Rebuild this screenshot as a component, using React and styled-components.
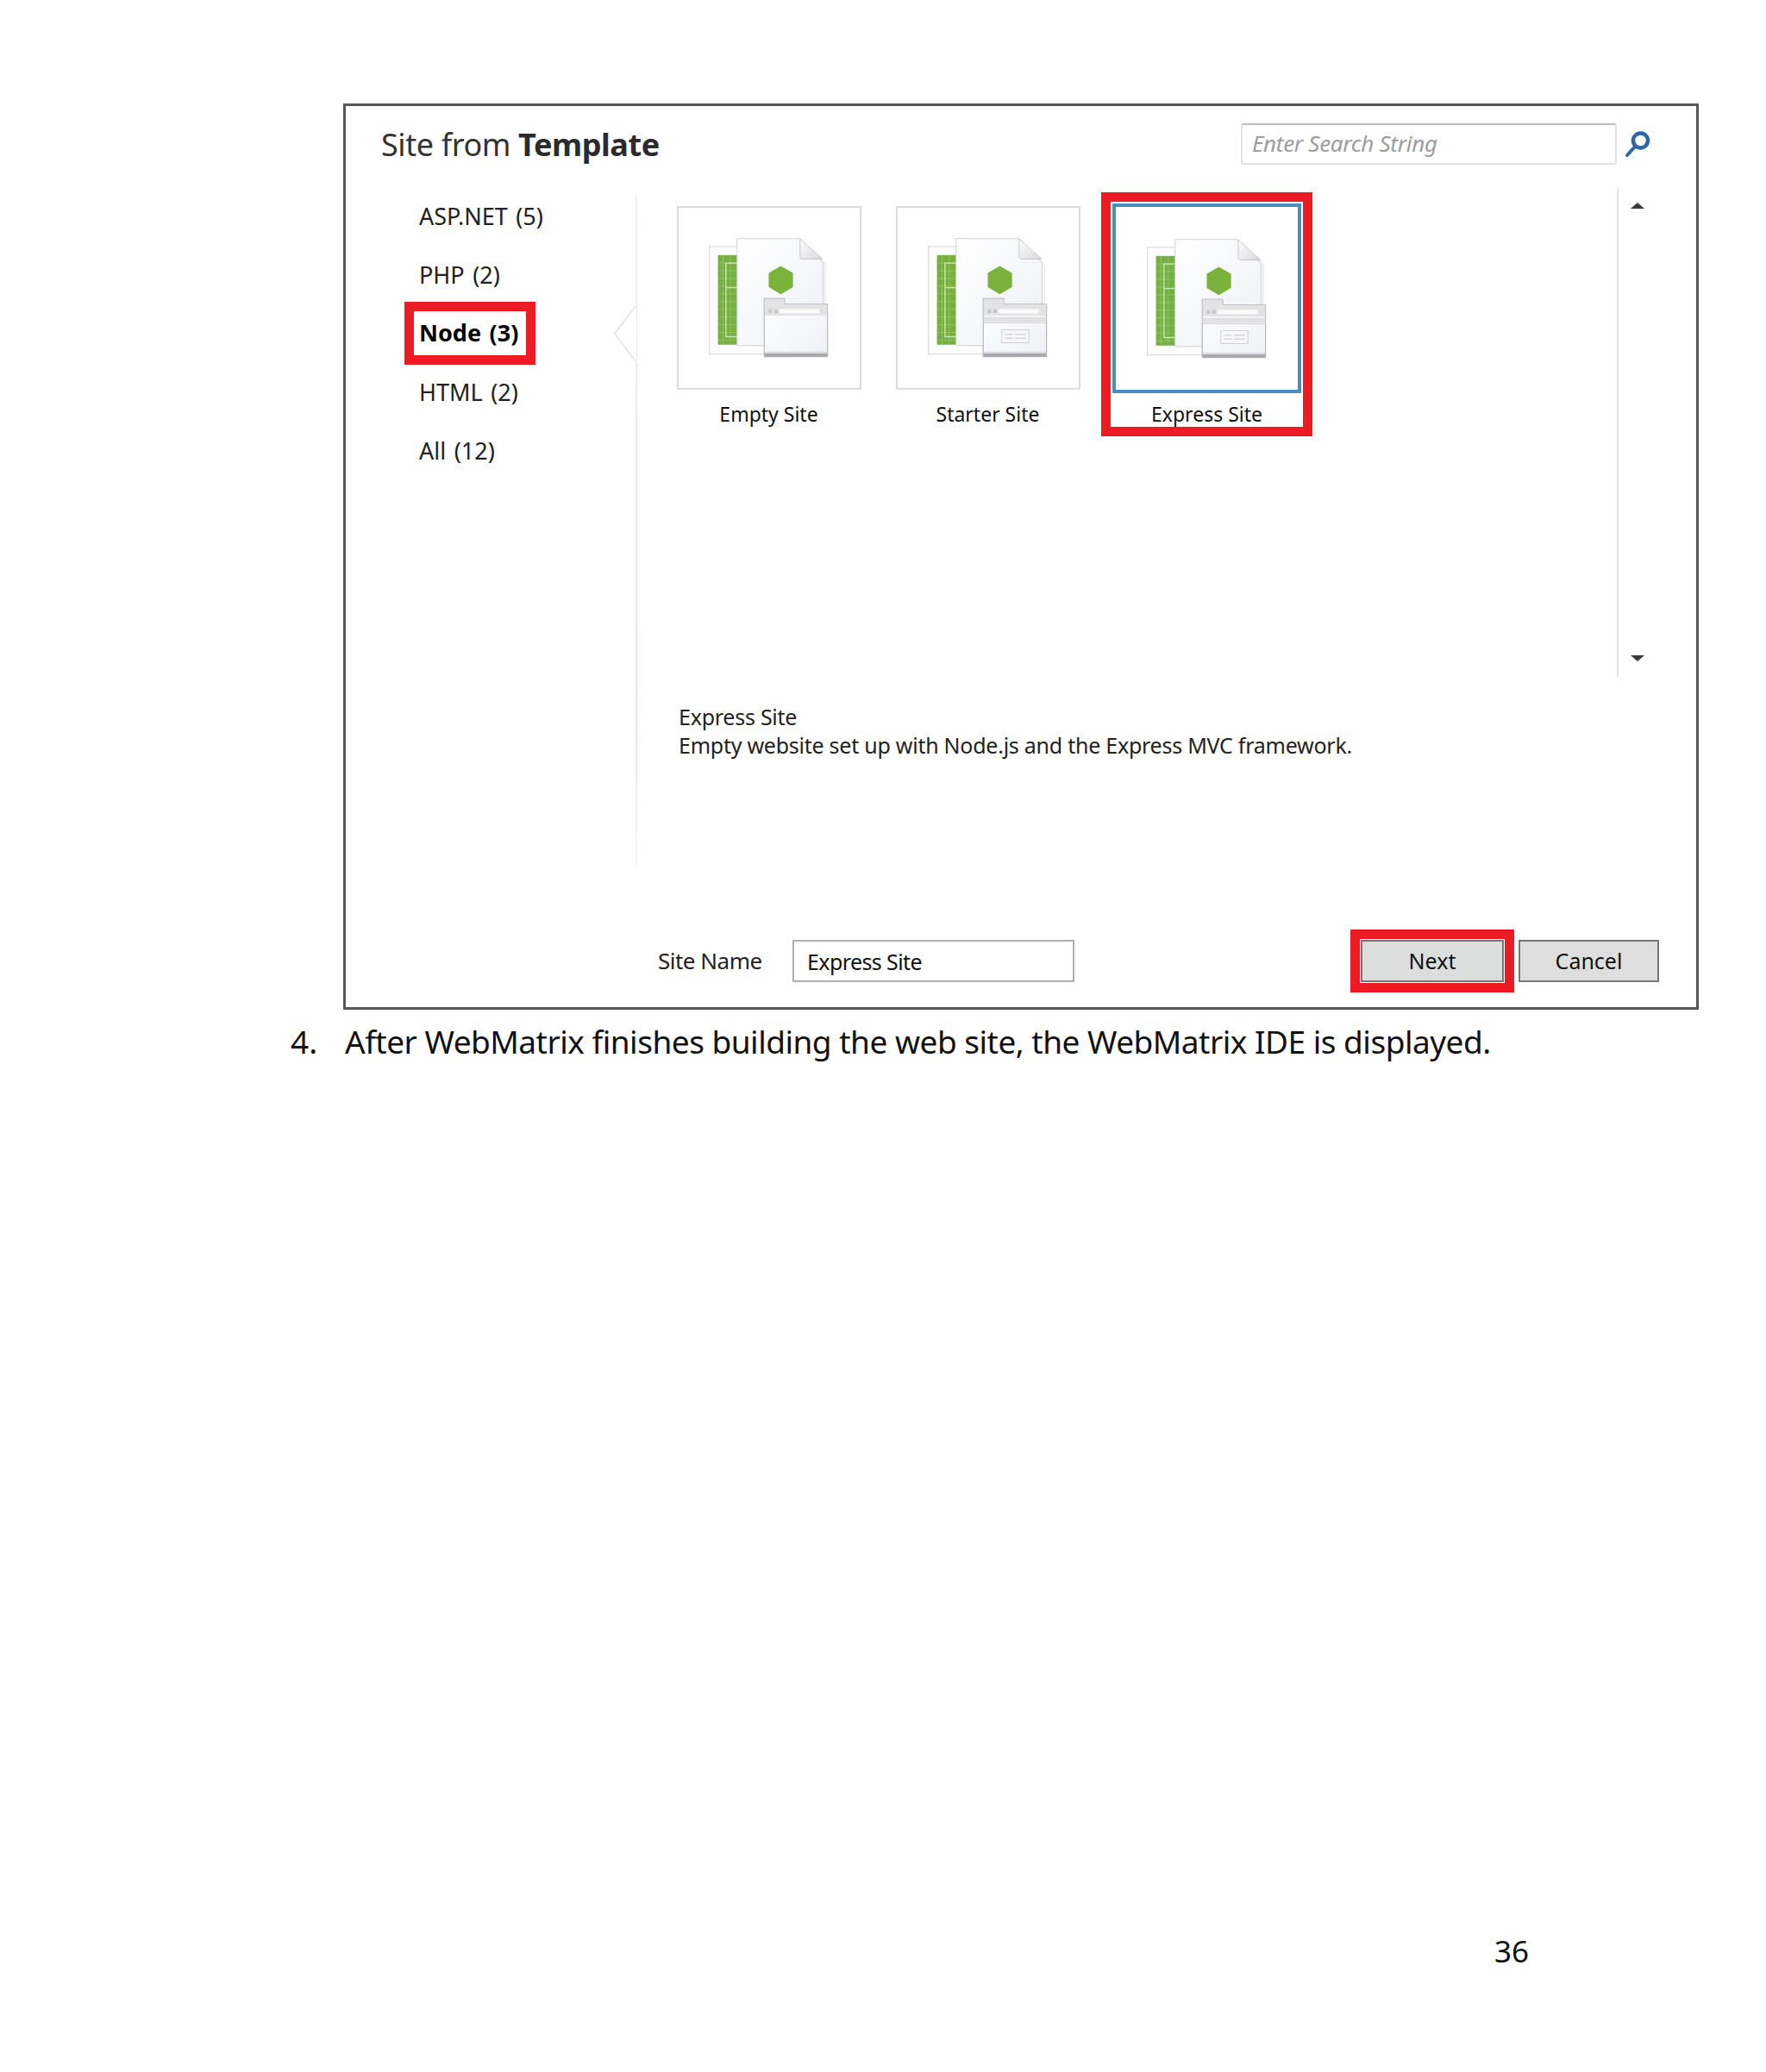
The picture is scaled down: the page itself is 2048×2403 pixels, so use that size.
import React from "react";
import styled, { createGlobalStyle } from "styled-components";

const RED = "#ed1c24";
const UI_FONT = `"Noto Sans", "Open Sans", sans-serif`;

const categories = [
  { label: "ASP.NET (5)" },
  { label: "PHP (2)" },
  { label: "Node (3)", selected: true },
  { label: "HTML (2)" },
  { label: "All (12)" },
];

const templates = [
  { label: "Empty Site", variant: "empty" },
  { label: "Starter Site", variant: "form" },
  { label: "Express Site", variant: "form", selected: true },
];

// the node template thumbnail, coordinates are 3x px
const TemplateIcon = ({ variant }) => (
  <svg width="139" height="139" viewBox="0 0 420 420">
    <defs>
      <linearGradient id="pageFill" x1="0" y1="0" x2="1" y2="1">
        <stop offset="0" stopColor="#ffffff" />
        <stop offset="1" stopColor="#eef0f6" />
      </linearGradient>
      <linearGradient id="foldFill" x1="0" y1="0" x2="1" y2="1">
        <stop offset="0" stopColor="#ffffff" />
        <stop offset="1" stopColor="#d8d8dc" />
      </linearGradient>
    </defs>

    {/* back sheet */}
    <rect x="2" y="30" width="250" height="377" fill="#fdfdfd" stroke="#d4d4d6" strokeWidth="3" />
    <rect x="32" y="60" width="72" height="314" fill="#76b041" />
    {[88, 115, 142, 169, 196, 223, 250, 277, 304, 331, 358].map((y) => (
      <line key={y} x1="32" x2="104" y1={y} y2={y} stroke="#9ccb74" strokeWidth="2" />
    ))}
    {[50, 75].map((x) => (
      <line key={x} x1={x} x2={x} y1="60" y2="374" stroke="#9ccb74" strokeWidth="2" />
    ))}
    <path d="M104 88 H60 V346 H104 M60 174 H104" fill="none" stroke="#cfe5b8" strokeWidth="4" />

    {/* front page with folded corner */}
    <path d="M404 92 V240 H410 V90 L322 4 Z" fill="#e2e2e4" opacity="0.7" />
    <path d="M99 2 H318 L400 88 V377 H99 Z" fill="url(#pageFill)" stroke="#d2d2d4" strokeWidth="3" />
    <path d="M320 3 V66 Q320 74 330 74 H398 Z" fill="url(#foldFill)" stroke="#c8c8cc" strokeWidth="3" />
    <polygon points="252,98 295,122 295,172 252,197 210,172 210,122" fill="#7ab23c" />

    {/* browser window */}
    <path d="M194 212 H266 V232 H416 V416 H194 Z" fill="url(#pageFill)" stroke="#a8a8ac" strokeWidth="3" />
    <path d="M196 214 H264 V234 H415 V272 H196 Z" fill="#e3e3e5" />
    <rect x="248" y="249" width="140" height="15" fill="#fbfbfb" />
    <rect x="210" y="250" width="11" height="13" fill="#c6c6c8" />
    <rect x="230" y="250" width="11" height="13" fill="#c6c6c8" />
    <rect x="195" y="404" width="221" height="12" fill="#a9a9ad" />
    <line x1="195" x2="416" y1="400" y2="400" stroke="#d5d5d8" strokeWidth="3" />
    {variant === "form" && (
      <g>
        <rect x="196" y="276" width="219" height="22" fill="#e8e8ea" />
        {[280, 288, 296].map((y, row) =>
          Array.from({ length: 36 }).map((_, i) => (
            <rect
              key={`${y}-${i}`}
              x={197 + i * 6 + (row % 2) * 3}
              y={y}
              width="3"
              height="3"
              fill="#c4c4c8"
            />
          ))
        )}
        <rect x="259" y="322" width="95" height="45" fill="#f7f7fa" stroke="#d0d0d4" strokeWidth="3" />
        <path d="M270 338 H298 M306 338 H344 M270 351 H298 M306 351 H344" stroke="#c8c8cc" strokeWidth="3" />
      </g>
    )}
  </svg>
);

const SearchIcon = () => (
  <svg width="30" height="32" viewBox="0 0 30 32">
    <circle cx="18.5" cy="12" r="8.5" fill="none" stroke="#2f66a5" strokeWidth="4.5" />
    <line x1="12.5" y1="18.5" x2="3" y2="29" stroke="#2f66a5" strokeWidth="4" strokeLinecap="round" />
  </svg>
);

const App = () => {
  return (
    <Page>
      <GlobalStyle />
      <Dialog>
        <Header>
          <Title>
            Site from <strong>Template</strong>
          </Title>
          <SearchBar>
            <SearchBox>Enter Search String</SearchBox>
            <SearchIcon />
          </SearchBar>
        </Header>

        <Body>
          <Sidebar>
            {categories.map((c) => (
              <Category key={c.label} $selected={c.selected}>
                {c.label}
              </Category>
            ))}
          </Sidebar>

          <Divider>
            <Notch width="28" height="64" viewBox="0 0 28 64">
              <polygon points="27,0 2,32 27,64" fill="#ffffff" />
              <polyline points="26,0 2,32 26,64" fill="none" stroke="#e6e6e6" strokeWidth="2" />
            </Notch>
          </Divider>

          <Main>
            <Gallery>
              <Tiles>
                {templates.map((t) => (
                  <Tile key={t.label} $selected={t.selected}>
                    <Thumb $selected={t.selected}>
                      <TemplateIcon variant={t.variant} />
                    </Thumb>
                    <TileLabel $selected={t.selected}>{t.label}</TileLabel>
                  </Tile>
                ))}
              </Tiles>
              <ScrollTrack>
                <ArrowUp />
                <ArrowDown />
              </ScrollTrack>
            </Gallery>
            <Description>
              Express Site
              <br />
              Empty website set up with Node.js and the Express MVC framework.
            </Description>
          </Main>
        </Body>

        <Footer>
          <FieldLabel>Site Name</FieldLabel>
          <NameInput>Express Site</NameInput>
          <NextHighlight>
            <Button>Next</Button>
          </NextHighlight>
          <CancelButton>Cancel</CancelButton>
        </Footer>
      </Dialog>

      <Step>
        <StepNumber>4.</StepNumber>
        <StepText>
          After WebMatrix finishes building the web site, the WebMatrix IDE is displayed.
        </StepText>
      </Step>

      <PageNumber>36</PageNumber>
    </Page>
  );
};

const GlobalStyle = createGlobalStyle`
  html, body {
    margin: 0;
    padding: 0;
    background: #ffffff;
  }
`;

const Page = styled.div`
  width: 2048px;
  height: 2403px;
  box-sizing: border-box;
  padding: 120px 0 0 337px;
  font-family: ${UI_FONT};
  overflow: hidden;
  color: #111;
`;

const Dialog = styled.div`
  width: 1572px;
  height: 1051px;
  box-sizing: border-box;
  margin-left: 61px;
  border: 3px solid #565656;
  display: flex;
  flex-direction: column;
  background: #fff;
`;

const Header = styled.div`
  height: 94px;
  flex: none;
  display: flex;
  align-items: flex-start;
  justify-content: space-between;
  padding: 20px 33px 0 41px;
  box-sizing: border-box;
`;

const Title = styled.h1`
  margin: 0;
  font-size: 36px;
  line-height: 50px;
  font-weight: 400;
  letter-spacing: -0.4px;
  color: #333;

  strong {
    font-weight: 700;
    color: #2b2b2b;
  }
`;

const SearchBar = styled.div`
  display: flex;
  align-items: center;
  gap: 9px;
  margin-right: 20px;
`;

const SearchBox = styled.div`
  width: 436px;
  height: 48px;
  box-sizing: border-box;
  border: 2px solid #e2e2e2;
  border-top-color: #bdbdbd;
  border-radius: 3px;
  padding-left: 11px;
  font-size: 26px;
  line-height: 42px;
  font-style: italic;
  letter-spacing: -0.3px;
  color: #9c9c9c;
`;

const Body = styled.div`
  display: flex;
  flex: none;
  height: 790px;
`;

const Sidebar = styled.nav`
  width: 336px;
  flex: none;
  box-sizing: border-box;
  padding-left: 68px;
  display: flex;
  flex-direction: column;
  align-items: flex-start;
`;

const Category = styled.div`
  box-sizing: border-box;
  height: ${(p) => (p.$selected ? "73px" : "68px")};
  margin: ${(p) => (p.$selected ? "-3px 0 -2px" : "0")};
  padding: 0 9px 2px 6px;
  display: flex;
  align-items: center;
  border: 11px solid ${(p) => (p.$selected ? RED : "transparent")};
  font-size: 27px;
  font-weight: ${(p) => (p.$selected ? 700 : 400)};
  word-spacing: 2.5px;
  color: ${(p) => (p.$selected ? "#000" : "#222")};
`;

const Divider = styled.div`
  position: relative;
  width: 2px;
  height: 777px;
  margin-top: 10px;
  flex: none;
  background: linear-gradient(#efefef, #e6e6e6 80%, #f6f6f6);
`;

const Notch = styled.svg`
  position: absolute;
  left: -26px;
  top: 128px;
`;

const Main = styled.div`
  flex: 1;
  min-width: 0;
  display: flex;
  flex-direction: column;
  padding: 0 46px 0 30px;
`;

const Gallery = styled.div`
  display: flex;
  height: 568px;
  flex: none;
`;

const Tiles = styled.div`
  flex: 1;
  display: flex;
  align-items: flex-start;
  gap: 9px;
  padding-top: 6px;
`;

const Tile = styled.div`
  width: 245px;
  height: 283px;
  box-sizing: border-box;
  border: 11px solid ${(p) => (p.$selected ? RED : "transparent")};
  padding: 2px;
  display: flex;
  flex-direction: column;
  align-items: center;
`;

const Thumb = styled.div`
  box-sizing: border-box;
  flex: none;
  width: ${(p) => (p.$selected ? "219px" : "214px")};
  height: ${(p) => (p.$selected ? "220px" : "213px")};
  margin-top: ${(p) => (p.$selected ? "0" : "3px")};
  border: ${(p) => (p.$selected ? "4px solid #4a8dbf" : "2px solid #dcdcdc")};
  display: flex;
  align-items: center;
  justify-content: center;
`;

const TileLabel = styled.div`
  flex: none;
  margin-top: ${(p) => (p.$selected ? "10px" : "14px")};
  font-size: 23px;
  line-height: 28px;
  color: #111;
`;

const ScrollTrack = styled.div`
  width: 46px;
  flex: none;
  margin-top: 2px;
  box-sizing: border-box;
  border-left: 2px solid #e4e4e4;
  display: flex;
  flex-direction: column;
  align-items: center;
  justify-content: space-between;
  padding: 16px 0 18px;
`;

const ArrowUp = styled.div`
  width: 0;
  height: 0;
  border-left: 8px solid transparent;
  border-right: 8px solid transparent;
  border-bottom: 7px solid #3a3a3a;
`;

const ArrowDown = styled.div`
  width: 0;
  height: 0;
  border-left: 8px solid transparent;
  border-right: 8px solid transparent;
  border-top: 7px solid #3a3a3a;
`;

const Description = styled.p`
  margin: 30px 0 0 18px;
  font-size: 25px;
  line-height: 33px;
  letter-spacing: -0.25px;
  color: #222;
`;

const Footer = styled.div`
  margin-top: auto;
  display: flex;
  align-items: center;
  height: 73px;
  flex: none;
  padding: 0 43px 17px 362px;
`;

const FieldLabel = styled.div`
  width: 156px;
  flex: none;
  padding-bottom: 2px;
  font-size: 26px;
  letter-spacing: -0.5px;
  color: #222;
`;

const NameInput = styled.div`
  width: 327px;
  height: 49px;
  box-sizing: border-box;
  border: 2px solid #b0b0b0;
  padding-left: 15px;
  font-size: 25px;
  line-height: 46px;
  letter-spacing: -0.6px;
  color: #111;
`;

const NextHighlight = styled.div`
  margin-left: auto;
  box-sizing: border-box;
  width: 190px;
  height: 73px;
  border: 11px solid ${RED};
  padding: 1px;
`;

const Button = styled.div`
  box-sizing: border-box;
  width: 166px;
  height: 49px;
  border: 2px solid #777;
  background: #dcdddd;
  text-align: center;
  font-size: 25px;
  line-height: 45px;
  color: #111;
`;

const CancelButton = styled(Button)`
  width: 163px;
  margin-left: 5px;
  background: #dedede;
`;

const Step = styled.div`
  display: flex;
  margin-top: 11px;
  font-size: 37px;
  line-height: 52px;
  color: #111;
`;

const StepNumber = styled.div`
  width: 63px;
  flex: none;
`;

const StepText = styled.div`
  letter-spacing: -0.5px;
  white-space: nowrap;
`;

const PageNumber = styled.div`
  margin: 1005px 0 0 1396px;
  font-size: 35px;
  line-height: 48px;
  color: #111;
`;

export default App;
